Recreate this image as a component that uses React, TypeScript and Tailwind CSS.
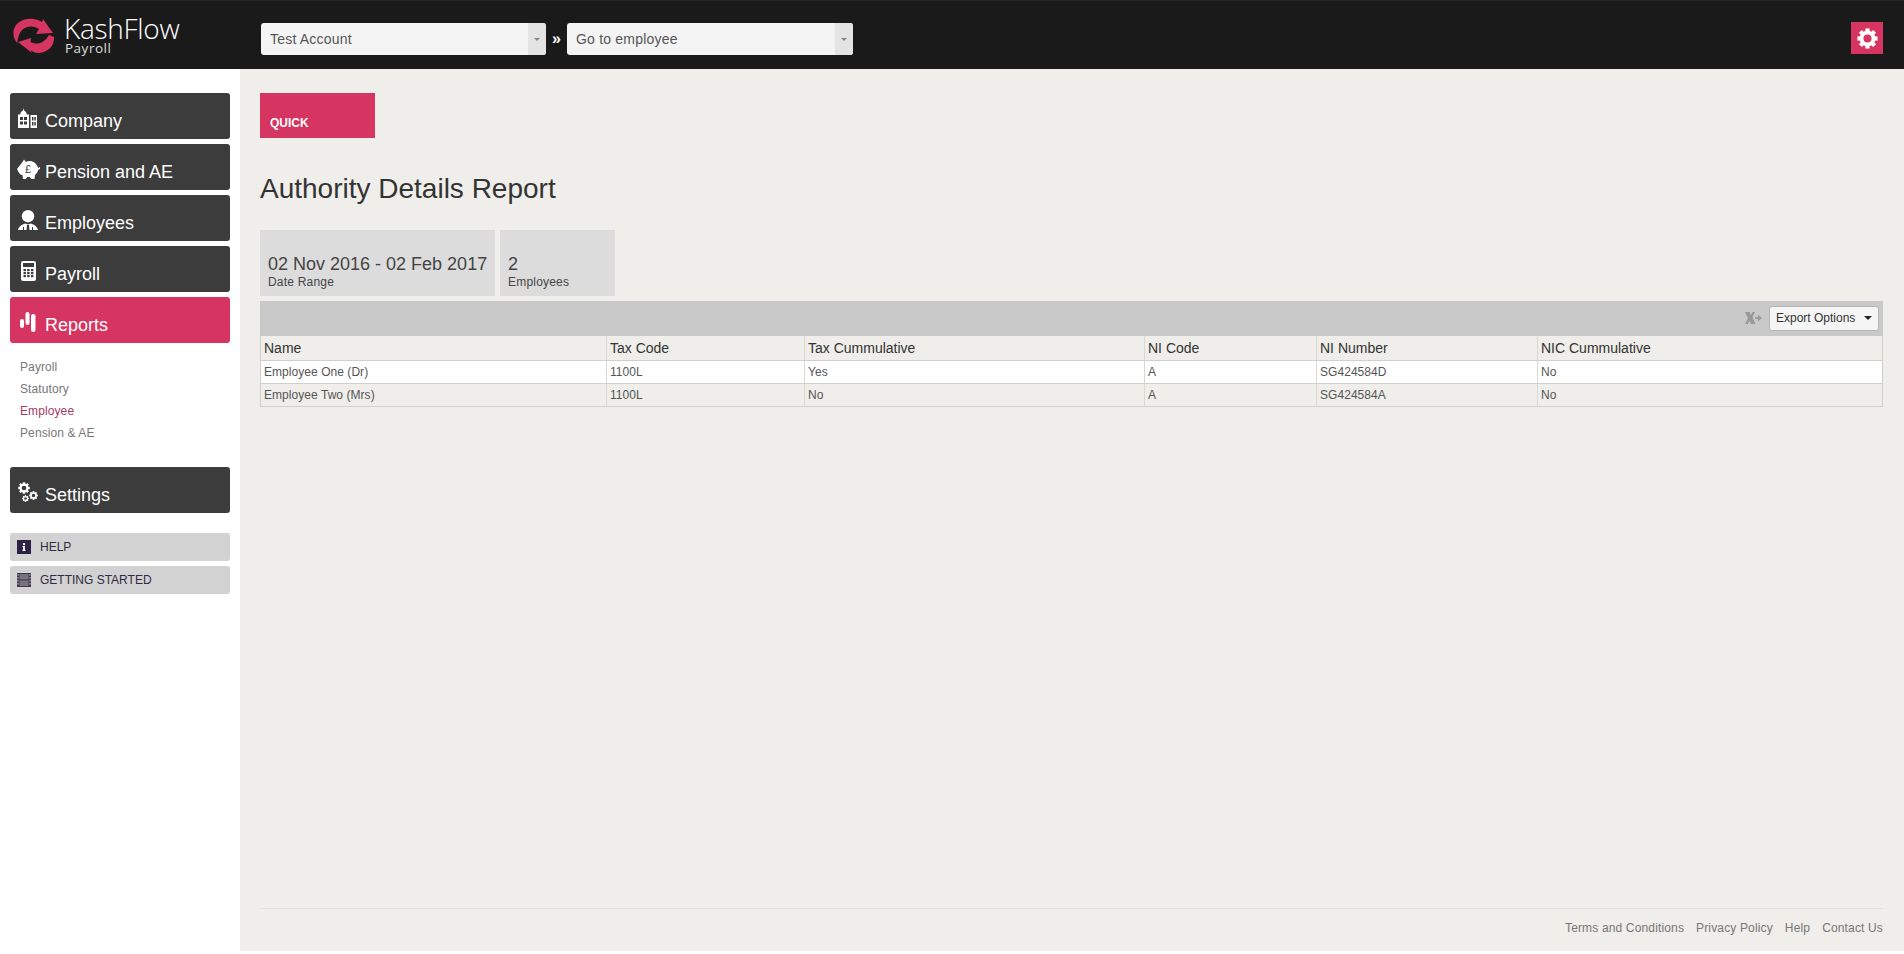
import React from "react";
import { FaInfo } from "react-icons/fa";

const TEETH = [0, 45, 90, 135, 180, 225, 270, 315];

const Gear = ({ size, x, y }: { size: number; x?: number; y?: number }) => (
  <svg width={size} height={size} x={x} y={y} viewBox="0 0 24 24" fill="white">
    <circle cx="12" cy="12" r="6.8" fill="none" stroke="white" strokeWidth="4.4" />
    {TEETH.map((a) => (
      <rect key={a} x="9.6" y="0.5" width="4.8" height="5" transform={`rotate(${a} 12 12)`} />
    ))}
  </svg>
);

const SettingsIcon = () => (
  <svg width="20" height="20" viewBox="0 0 20 20">
    <Gear size={12} x={0} y={0} />
    <Gear size={9} x={11} y={9} />
    <Gear size={7} x={4} y={13} />
  </svg>
);

const BuildingIcon = () => (
  <svg width="20" height="20" viewBox="0 0 20 20" fill="white">
    <path d="M5.5 0 L6 2.5 C7.5 3 8.5 4.5 8.8 6.5 H11 V20 H0 V6.5 H2.2 C2.5 4.5 3.5 3 5 2.5 Z" />
    <path d="M12.5 7 H19 V20 H12.5 Z" />
    <g fill="#3c3c3c">
      <rect x="2" y="9" width="3" height="3" /><rect x="6" y="9" width="3" height="3" />
      <rect x="2" y="13.5" width="3" height="3" /><rect x="6" y="13.5" width="3" height="3" />
      <rect x="14" y="9" width="1.5" height="3.5" /><rect x="16.3" y="9" width="1.5" height="3.5" />
      <rect x="14" y="14" width="1.5" height="3.5" /><rect x="16.3" y="14" width="1.5" height="3.5" />
    </g>
  </svg>
);

const PiggyIcon = () => (
  <svg width="23" height="20" viewBox="0 0 23 20" fill="white">
    <path d="M0 10 L4 5 C5 4 6 2 7 0.5 L9 3 C11 1.5 15 1.5 18 4 C20 6 21 8 21 9 L23 8 L23 10 L21 11 C21 13 19 15 18 16 L17.5 20 H14 L13 18 H10 L9 20 H6 L5.5 16 C3 16 2 14 0 10 Z" />
    <text x="11" y="14" fontSize="11" fontFamily="'Liberation Sans',sans-serif" textAnchor="middle" fill="#3c3c3c">£</text>
  </svg>
);

const PersonIcon = () => (
  <svg width="20" height="20" viewBox="0 0 20 20" fill="white">
    <circle cx="10" cy="6.2" r="6.2" />
    <path d="M0 20 C1 16 4 14.5 7 13.5 L10 14.5 L13 13.5 C16 14.5 19 16 20 20 Z" />
    <path d="M9 15 H11 L11.5 20 H8.5 Z" fill="#3c3c3c" />
    <rect x="5" y="17" width="1" height="3" fill="#3c3c3c" />
    <rect x="14" y="17" width="1" height="3" fill="#3c3c3c" />
  </svg>
);

const CalcIcon = () => (
  <svg width="15" height="20" viewBox="0 0 15 20" fill="white">
    <rect x="0" y="0" width="15" height="20" rx="2" />
    <rect x="2" y="2" width="11" height="4" fill="#3c3c3c" />
    {[8, 11, 14].map((y) =>
      [2.5, 6.2, 10].map((x) => <rect key={`${x}-${y}`} x={x} y={y} width="2.4" height="2.2" fill="#3c3c3c" />)
    )}
  </svg>
);

const BarsIcon = () => (
  <svg width="16" height="20" viewBox="0 0 16 20" fill="white">
    <rect x="0" y="7" width="4" height="9" rx="2" />
    <rect x="5.5" y="0" width="4" height="13" rx="2" />
    <rect x="11" y="2" width="4.5" height="18" rx="2.2" />
  </svg>
);

const FilmIcon = () => (
  <svg width="14" height="14" viewBox="0 0 14 14">
    <rect width="14" height="14" fill="#3d3850" />
    <rect x="2.5" y="1" width="9" height="5.5" fill="#77737f" />
    <rect x="2.5" y="7.5" width="9" height="5.5" fill="#77737f" />
    {[1, 4, 7, 10].map((y) => (
      <g key={y}>
        <rect x="0.5" y={y} width="1" height="1.5" fill="#c5c5c5" />
        <rect x="12.5" y={y} width="1" height="1.5" fill="#c5c5c5" />
      </g>
    ))}
  </svg>
);

const Logo = () => (
  <svg width="50" height="50" viewBox="10 10 50 50" fill="#d63461">
    <path d="M17 43 C12 37 12 28 18 23 C24 18 34 17 42 22 L43 19 L53 33 L36 34 L39 29 C33 25 26 26 22 30 C19 33 18 38 17 43 Z" />
    <path d="M18 42 L31 38 L30.5 42 C36 45 44 44 49 35 L54 37 C55 46 47 53 38 53 C35 53 33 52 30.5 50 L32 53 Z" />
  </svg>
);

function SideBtn({ icon, label, active }: { icon: React.ReactNode; label: string; active?: boolean }) {
  return (
    <div className={active ? "flex items-center h-[46px] rounded-[3px] mx-[10px] bg-[#d63461] text-white text-[18px]" : "flex items-center h-[46px] rounded-[3px] mx-[10px] bg-[#3c3c3c] text-white text-[18px]"}>
      <div className="w-[35px] h-full flex items-center justify-center pl-[1px] pt-[4px] shrink-0">{icon}</div>
      <span className="pt-[11px]">{label}</span>
    </div>
  );
}

function SelectBox({ label, w }: { label: string; w: string }) {
  return (
    <div className={`${w} mt-[8px] h-[32px] rounded-[3px] bg-[#f4f4f4] flex items-center text-[14px] text-[#555]`}>
      <span className="flex-1 pl-[9px] tracking-[0.2px]">{label}</span>
      <div className="w-[18px] h-full bg-[#e4e4e4] rounded-r-[3px] flex items-center justify-center">
        <div className="w-0 h-0 border-x-[3px] border-x-transparent border-t-[3px] border-t-[#888]" />
      </div>
    </div>
  );
}

const cols = ["w-[346px]", "w-[198px]", "w-[340px]", "w-[172px]", "w-[221px]", "flex-1"];
const head = ["Name", "Tax Code", "Tax Cummulative", "NI Code", "NI Number", "NIC Cummulative"];
const rows = [
  ["Employee One (Dr)", "1100L", "Yes", "A", "SG424584D", "No"],
  ["Employee Two (Mrs)", "1100L", "No", "A", "SG424584A", "No"],
];

export default function App() {
  return (
    <div className="h-[951px] flex flex-col bg-white font-['Liberation_Sans',Arial,sans-serif]">
      <header className="h-[69px] shrink-0 bg-[#1a1a1a] border-t border-t-[#262626] flex items-center">
        <div className="w-[261px] shrink-0 flex items-center pl-[10px]">
          <Logo />
          <div className="ml-[4px] text-white font-['Open_Sans',sans-serif] font-light">
            <div className="text-[28px] leading-[28px] -mt-[2px] tracking-[-0.3px]">KashFlow</div>
            <div className="text-[13.5px] leading-[13px] ml-[1px] tracking-[0.5px] text-[#ddd] font-normal">Payroll</div>
          </div>
        </div>
        <SelectBox label="Test Account" w="w-[285px]" />
        <span className="w-[21px] mt-[8px] text-center text-white font-bold text-[16px] leading-none pb-[1px]">»</span>
        <SelectBox label="Go to employee" w="w-[286px]" />
        <div className="ml-auto mt-[6px] mr-[21px] w-[32px] h-[32px] bg-[#d63461] flex items-center justify-center">
          <Gear size={21} />
        </div>
      </header>
      <div className="flex-1 flex min-h-0">
        <aside className="w-[240px] shrink-0 bg-white pt-[24px]">
          <div className="flex flex-col gap-[5px]">
            <SideBtn icon={<BuildingIcon />} label="Company" />
            <SideBtn icon={<PiggyIcon />} label="Pension and AE" />
            <SideBtn icon={<PersonIcon />} label="Employees" />
            <SideBtn icon={<CalcIcon />} label="Payroll" />
            <SideBtn icon={<BarsIcon />} label="Reports" active />
          </div>
          <nav className="pl-[20px] pt-[13px] text-[12px] leading-[22px] tracking-[0.1px] text-[#777]">
            <div>Payroll</div>
            <div>Statutory</div>
            <div className="text-[#a83a60]">Employee</div>
            <div>Pension &amp; AE</div>
          </nav>
          <div className="mt-[23px]">
            <SideBtn icon={<SettingsIcon />} label="Settings" />
          </div>
          <div className="mt-[20px] flex flex-col gap-[5px] mx-[10px] text-[12px] text-[#2f2a45]">
            <div className="h-[28px] rounded-[3px] bg-[#d2d2d2] flex items-center pl-[7px]">
              <div className="w-[14px] h-[14px] bg-[#2a2145] flex items-center justify-center text-white"><FaInfo size={8} /></div>
              <span className="ml-[9px]">HELP</span>
            </div>
            <div className="h-[28px] rounded-[3px] bg-[#d2d2d2] flex items-center pl-[7px]">
              <FilmIcon />
              <span className="ml-[9px]">GETTING STARTED</span>
            </div>
          </div>
        </aside>
        <main className="flex-1 min-w-0 bg-[#efeeea] pl-[20px] pr-[21px] pt-[24px] flex flex-col">
          <div className="w-[115px] h-[45px] bg-[#d63461] text-white font-bold text-[12px] flex items-end pl-[10px] pb-[8px] leading-[14px]">QUICK</div>
          <h1 className="mt-[31px] text-[28px] leading-[40px] text-[#333]">Authority Details Report</h1>
          <div className="mt-[21px] flex gap-[5px] text-[#444]">
            <div className="w-[235px] h-[66px] bg-[#dcdcdc] pl-[8px] pt-[24px]">
              <div className="text-[18px] leading-[20px]">02 Nov 2016 - 02 Feb 2017</div>
              <div className="text-[12px] leading-[14px] mt-[1px] tracking-[0.2px]">Date Range</div>
            </div>
            <div className="w-[115px] h-[66px] bg-[#dcdcdc] pl-[8px] pt-[24px]">
              <div className="text-[18px] leading-[20px]">2</div>
              <div className="text-[12px] leading-[14px] mt-[1px] tracking-[0.2px]">Employees</div>
            </div>
          </div>
          <div className="mt-[5px] h-[35px] bg-[#c9c9c9] flex items-center justify-end pr-[4px]">
            <svg width="17" height="12" viewBox="0 0 17 12" fill="#999" className="mr-[7px] mb-[1px]">
              <path d="M0 0 H4.5 L6 3 L7.5 0 H10 L7.5 5 L10.5 12 H6 L4.5 8.5 L3 12 H0 L3 6 Z" />
              <path d="M10 5 H13 V2.5 L17 6 L13 9.5 V7 H10.5 Z" />
            </svg>
            <div className="w-[110px] h-[25px] mb-[1px] bg-[#f5f5f5] border border-[#b5b5b5] rounded-[3px] flex items-center pl-[6px] text-[12px] text-[#333]">
              Export Options
              <div className="ml-[9px] w-0 h-0 border-x-[4px] border-x-transparent border-t-[4px] border-t-[#222]" />
            </div>
          </div>
          <div className="border-x border-b border-[#cfcfcb]">
            <div className="flex h-[25px] border-b border-[#cfcfcb] bg-[#efeeea] text-[14px] text-[#333]">
              {head.map((h, i) => (
                <div key={h} className={`${cols[i]} pl-[3px] flex items-center ${i < 5 ? "border-r border-[#d8d8d4]" : ""}`}>{h}</div>
              ))}
            </div>
            {rows.map((r, ri) => (
              <div key={ri} className={`flex text-[12px] tracking-[0.05px] text-[#555] ${ri === 0 ? "h-[23px] bg-white border-b border-[#cfcfcb]" : "h-[22px] bg-[#efeeea]"}`}>
                {r.map((c, i) => (
                  <div key={i} className={`${cols[i]} pl-[3px] flex items-center ${i < 5 ? "border-r border-[#d8d8d4]" : ""}`}>{c}</div>
                ))}
              </div>
            ))}
          </div>
          <footer className="mt-auto h-[43px] border-t border-[#e2e2de] flex items-center justify-end gap-[12px] text-[12px] tracking-[0.15px] text-[#777] pb-[5px]">
            <span>Terms and Conditions</span>
            <span>Privacy Policy</span>
            <span>Help</span>
            <span>Contact Us</span>
          </footer>
        </main>
      </div>
    </div>
  );
}
